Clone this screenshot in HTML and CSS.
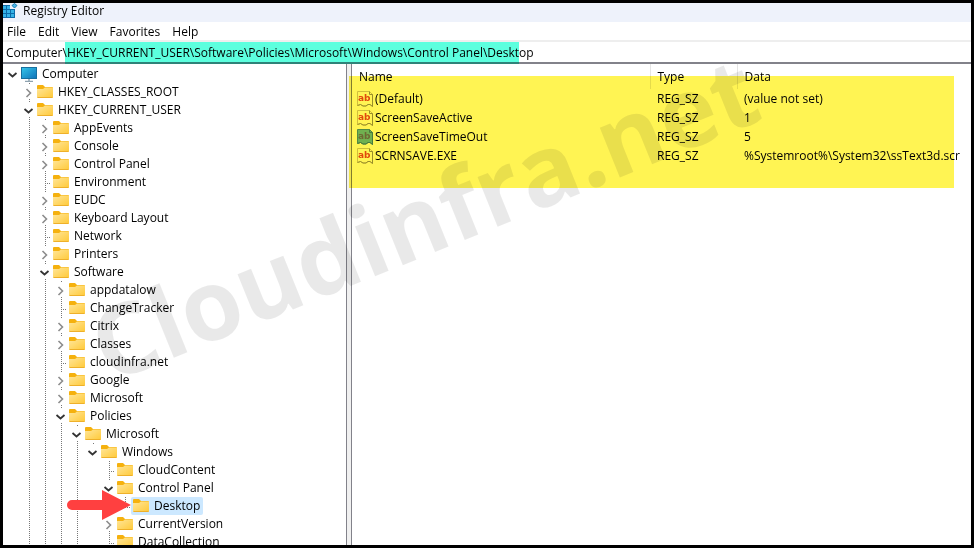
FILE: index.html
```html
<!DOCTYPE html>
<html lang="en">

<head>
    <meta charset="UTF-8">
    <meta name="viewport" content="width=device-width, initial-scale=1.0">
    <title>Registry Editor</title>
    <link rel="stylesheet" href="styles.css">
</head>

<body>
    <!-- shared icons -->
    <svg class="sprite" width="0" height="0" aria-hidden="true">
        <defs>
            <linearGradient id="folder-front" x1="0" y1="0" x2="1" y2="1">
                <stop offset="0" stop-color="#ffe69a" />
                <stop offset="1" stop-color="#ffc937" />
            </linearGradient>
            <linearGradient id="screen" x1="0" y1="0" x2="1" y2="1">
                <stop offset="0" stop-color="#35c6ea" />
                <stop offset="1" stop-color="#0f72b8" />
            </linearGradient>
        </defs>
        <symbol id="folder" viewBox="0 0 16 16">
            <path d="M0 2 Q0 1 1 1 H6 L8 3 H15 Q16 3 16 4 V8 H0 Z" fill="#f5b10e" />
            <path d="M0 5 H6 L8 3.500 H16 V13 Q16 14 15 14 H1 Q0 14 0 13 Z" fill="url(#folder-front)" />
            <path d="M0.500 13.500 H15.500" stroke="#eeb02a" />
        </symbol>
        <symbol id="open" viewBox="0 0 15 18">
            <path d="M4.500 8 L8.500 11.500 L12.500 8" fill="none" stroke="#333" stroke-width="1.800" />
        </symbol>
        <symbol id="closed" viewBox="0 0 15 18">
            <path d="M6.500 6 L10.500 10 L6.500 14" fill="none" stroke="#8c8c8c" stroke-width="1.600" />
        </symbol>
        <symbol id="string" viewBox="0 0 16 16">
            <path class="paper" d="M0.500 0.500 H12.500 L15.500 3.500 V15.500 L13 13.500 L11 13.500 L9 15 L6 15 L3.500 13.500 L0.500 14.500 Z" />
            <path class="edge" d="M12.500 0.500 V3.500 H15.500 V15.500 L13 13.500 L11 13.500 L9 15 L6 15 L3.500 13.500 L0.500 14.500" />
            <text class="letters" x="1" y="10">ab</text>
        </symbol>
    </svg>

    <header class="title-bar">
        <svg class="logo" width="16" height="16" viewBox="0 0 16 16">
            <path d="M0 2 H7 V6 H12 V15 H0 Z" fill="#0c6ba8" />
            <g fill="#35b2e6">
                <rect x="0" y="3" width="3" height="3" />
                <rect x="4" y="3" width="3" height="3" />
                <rect x="0" y="7" width="3" height="3" />
                <rect x="4" y="7" width="3" height="3" />
                <rect x="8" y="7" width="3" height="3" />
                <rect x="0" y="11" width="3" height="3" />
                <rect x="4" y="11" width="3" height="3" />
                <rect x="8" y="11" width="3" height="3" />
            </g>
            <path d="M11.500 0.500 L14 2.500 L11.500 5 L9 2.500 Z" fill="#4cb8e6" stroke="#1678b4" />
        </svg>
        <h1>Registry Editor</h1>
    </header>

    <nav class="menu-bar">
        <button type="button">File</button>
        <button type="button">Edit</button>
        <button type="button">View</button>
        <button type="button">Favorites</button>
        <button type="button">Help</button>
    </nav>

    <div class="address-bar">
        <input type="text" aria-label="Address" value="Computer\HKEY_CURRENT_USER\Software\Policies\Microsoft\Windows\Control Panel\Desktop">
        <div class="marker marker-path"></div>
    </div>

    <main class="panes">
        <section class="tree">
            <ul>
                <li class="root">
                    <div class="row">
                        <button type="button" class="twist" aria-label="Collapse Computer"><svg><use href="#open" /></svg></button>
                        <span class="item">
                            <svg class="icon" viewBox="0 0 16 16">
                                <rect x="0.500" y="1.500" width="15" height="11" fill="url(#screen)" stroke="#176f9f" />
                                <path d="M8 13 V15 M4 15.500 H12" stroke="#8fa3b0" stroke-width="1.500" />
                            </svg>Computer</span>
                    </div>
                    <ul>
                        <li>
                            <div class="row">
                                <button type="button" class="twist" aria-label="Expand HKEY_CLASSES_ROOT"><svg><use href="#closed" /></svg></button>
                                <span class="item"><svg class="icon"><use href="#folder" /></svg>HKEY_CLASSES_ROOT</span>
                            </div>
                        </li>
                        <li class="more">
                            <div class="row">
                                <button type="button" class="twist" aria-label="Collapse HKEY_CURRENT_USER"><svg><use href="#open" /></svg></button>
                                <span class="item"><svg class="icon"><use href="#folder" /></svg>HKEY_CURRENT_USER</span>
                            </div>
                            <ul>
                                <li>
                                    <div class="row">
                                        <button type="button" class="twist" aria-label="Expand AppEvents"><svg><use href="#closed" /></svg></button>
                                        <span class="item"><svg class="icon"><use href="#folder" /></svg>AppEvents</span>
                                    </div>
                                </li>
                                <li>
                                    <div class="row">
                                        <button type="button" class="twist" aria-label="Expand Console"><svg><use href="#closed" /></svg></button>
                                        <span class="item"><svg class="icon"><use href="#folder" /></svg>Console</span>
                                    </div>
                                </li>
                                <li>
                                    <div class="row">
                                        <button type="button" class="twist" aria-label="Expand Control Panel"><svg><use href="#closed" /></svg></button>
                                        <span class="item"><svg class="icon"><use href="#folder" /></svg>Control Panel</span>
                                    </div>
                                </li>
                                <li>
                                    <div class="row">
                                        <span class="stub"></span>
                                        <span class="item"><svg class="icon"><use href="#folder" /></svg>Environment</span>
                                    </div>
                                </li>
                                <li>
                                    <div class="row">
                                        <button type="button" class="twist" aria-label="Expand EUDC"><svg><use href="#closed" /></svg></button>
                                        <span class="item"><svg class="icon"><use href="#folder" /></svg>EUDC</span>
                                    </div>
                                </li>
                                <li>
                                    <div class="row">
                                        <button type="button" class="twist" aria-label="Expand Keyboard Layout"><svg><use href="#closed" /></svg></button>
                                        <span class="item"><svg class="icon"><use href="#folder" /></svg>Keyboard Layout</span>
                                    </div>
                                </li>
                                <li>
                                    <div class="row">
                                        <span class="stub"></span>
                                        <span class="item"><svg class="icon"><use href="#folder" /></svg>Network</span>
                                    </div>
                                </li>
                                <li>
                                    <div class="row">
                                        <button type="button" class="twist" aria-label="Expand Printers"><svg><use href="#closed" /></svg></button>
                                        <span class="item"><svg class="icon"><use href="#folder" /></svg>Printers</span>
                                    </div>
                                </li>
                                <li class="more">
                                    <div class="row">
                                        <button type="button" class="twist" aria-label="Collapse Software"><svg><use href="#open" /></svg></button>
                                        <span class="item"><svg class="icon"><use href="#folder" /></svg>Software</span>
                                    </div>
                                    <ul>
                                        <li>
                                            <div class="row">
                                                <button type="button" class="twist" aria-label="Expand appdatalow"><svg><use href="#closed" /></svg></button>
                                                <span class="item"><svg class="icon"><use href="#folder" /></svg>appdatalow</span>
                                            </div>
                                        </li>
                                        <li>
                                            <div class="row">
                                                <span class="stub"></span>
                                                <span class="item"><svg class="icon"><use href="#folder" /></svg>ChangeTracker</span>
                                            </div>
                                        </li>
                                        <li>
                                            <div class="row">
                                                <button type="button" class="twist" aria-label="Expand Citrix"><svg><use href="#closed" /></svg></button>
                                                <span class="item"><svg class="icon"><use href="#folder" /></svg>Citrix</span>
                                            </div>
                                        </li>
                                        <li>
                                            <div class="row">
                                                <button type="button" class="twist" aria-label="Expand Classes"><svg><use href="#closed" /></svg></button>
                                                <span class="item"><svg class="icon"><use href="#folder" /></svg>Classes</span>
                                            </div>
                                        </li>
                                        <li>
                                            <div class="row">
                                                <span class="stub"></span>
                                                <span class="item"><svg class="icon"><use href="#folder" /></svg>cloudinfra.net</span>
                                            </div>
                                        </li>
                                        <li>
                                            <div class="row">
                                                <button type="button" class="twist" aria-label="Expand Google"><svg><use href="#closed" /></svg></button>
                                                <span class="item"><svg class="icon"><use href="#folder" /></svg>Google</span>
                                            </div>
                                        </li>
                                        <li>
                                            <div class="row">
                                                <button type="button" class="twist" aria-label="Expand Microsoft"><svg><use href="#closed" /></svg></button>
                                                <span class="item"><svg class="icon"><use href="#folder" /></svg>Microsoft</span>
                                            </div>
                                        </li>
                                        <li class="more">
                                            <div class="row">
                                                <button type="button" class="twist" aria-label="Collapse Policies"><svg><use href="#open" /></svg></button>
                                                <span class="item"><svg class="icon"><use href="#folder" /></svg>Policies</span>
                                            </div>
                                            <ul>
                                                <li class="more">
                                                    <div class="row">
                                                        <button type="button" class="twist" aria-label="Collapse Microsoft"><svg><use href="#open" /></svg></button>
                                                        <span class="item"><svg class="icon"><use href="#folder" /></svg>Microsoft</span>
                                                    </div>
                                                    <ul>
                                                        <li>
                                                            <div class="row">
                                                                <button type="button" class="twist" aria-label="Collapse Windows"><svg><use href="#open" /></svg></button>
                                                                <span class="item"><svg class="icon"><use href="#folder" /></svg>Windows</span>
                                                            </div>
                                                            <ul>
                                                                <li>
                                                                    <div class="row">
                                                                        <span class="stub"></span>
                                                                        <span class="item"><svg class="icon"><use href="#folder" /></svg>CloudContent</span>
                                                                    </div>
                                                                </li>
                                                                <li>
                                                                    <div class="row">
                                                                        <button type="button" class="twist" aria-label="Collapse Control Panel"><svg><use href="#open" /></svg></button>
                                                                        <span class="item"><svg class="icon"><use href="#folder" /></svg>Control Panel</span>
                                                                    </div>
                                                                    <ul>
                                                                        <li class="selected">
                                                                            <div class="row">
                                                                                <span class="stub"></span>
                                                                                <span class="item"><svg class="icon"><use href="#folder" /></svg>Desktop</span>
                                                                            </div>
                                                                            <svg class="arrow" width="64" height="30" viewBox="0 0 64 30">
                                                                                <path d="M5 10 H35 V0 L64 15 L35 30 V20 H5 A5 5 0 0 1 5 10 Z" fill="#ff4040" />
                                                                            </svg>
                                                                        </li>
                                                                    </ul>
                                                                </li>
                                                                <li>
                                                                    <div class="row">
                                                                        <button type="button" class="twist" aria-label="Expand CurrentVersion"><svg><use href="#closed" /></svg></button>
                                                                        <span class="item"><svg class="icon"><use href="#folder" /></svg>CurrentVersion</span>
                                                                    </div>
                                                                </li>
                                                                <li>
                                                                    <div class="row">
                                                                        <span class="stub"></span>
                                                                        <span class="item"><svg class="icon"><use href="#folder" /></svg>DataCollection</span>
                                                                    </div>
                                                                </li>
                                                            </ul>
                                                        </li>
                                                    </ul>
                                                </li>
                                            </ul>
                                        </li>
                                    </ul>
                                </li>
                            </ul>
                        </li>
                    </ul>
                </li>
            </ul>
        </section>

        <div class="splitter"></div>

        <section class="values">
            <table>
                <thead>
                    <tr>
                        <th class="col-name">Name</th>
                        <th class="col-type">Type</th>
                        <th>Data</th>
                    </tr>
                </thead>
                <tbody>
                    <tr>
                        <td><span class="value"><svg class="icon"><use href="#string" /></svg>(Default)</span></td>
                        <td>REG_SZ</td>
                        <td>(value not set)</td>
                    </tr>
                    <tr>
                        <td><span class="value"><svg class="icon"><use href="#string" /></svg>ScreenSaveActive</span></td>
                        <td>REG_SZ</td>
                        <td>1</td>
                    </tr>
                    <tr>
                        <td><span class="value current"><svg class="icon"><use href="#string" /></svg>ScreenSaveTimeOut</span></td>
                        <td>REG_SZ</td>
                        <td>5</td>
                    </tr>
                    <tr>
                        <td><span class="value"><svg class="icon"><use href="#string" /></svg>SCRNSAVE.EXE</span></td>
                        <td>REG_SZ</td>
                        <td>%Systemroot%\System32\ssText3d.scr</td>
                    </tr>
                </tbody>
            </table>
            <div class="marker marker-values"></div>
        </section>

        <div class="watermark">Cloudinfra.net</div>
    </main>
</body>

</html>
```
FILE: styles.css
```css
* {
    box-sizing: border-box;
}

body {
    display: flex;
    flex-direction: column;
    height: 100vh;
    margin: 0;
    border: 3px solid #000;
    overflow: hidden;
    background-color: #fff;
    color: #000;
    font-family: "Open Sans", "Noto Sans", sans-serif;
    font-size: 12px;
    line-height: 18px;
}

button,
input {
    margin: 0;
    padding: 0;
    border: none;
    background: none;
    color: inherit;
    font: inherit;
}

.sprite {
    position: absolute;
}

.icon {
    flex: none;
    width: 16px;
    height: 16px;
}

/* title and menu */
.title-bar {
    display: flex;
    align-items: flex-start;
    gap: 4px;
    height: 19px;
    background-color: #eef2fb;
}

.title-bar h1 {
    margin: 0;
    font-size: 12px;
    font-weight: normal;
    line-height: 16px;
}

.menu-bar {
    display: flex;
    gap: 12px;
    height: 18px;
    padding: 1px 0 0 4px;
}

/* address */
.address-bar {
    position: relative;
    display: flex;
    height: 24px;
    border-top: 2px solid #eee;
    border-bottom: 2px solid #82828a;
}

.address-bar input {
    flex: 1;
    padding: 1px 0 0 3px;
    outline: none;
}

.marker {
    position: absolute;
    mix-blend-mode: multiply;
    pointer-events: none;
}

.marker-path {
    top: 0;
    bottom: -2px;
    left: 62px;
    width: 454px;
    background-color: #5cffde;
}

.marker-values {
    top: 12px;
    right: 17px;
    left: -3px;
    height: 112px;
    background-color: #fff453;
}

/* panes */
.panes {
    position: relative;
    display: flex;
    flex: 1;
    min-height: 0;
}

.tree {
    flex: none;
    width: 343px;
    padding: 1px 0 0 1px;
    overflow: hidden;
}

.splitter {
    flex: none;
    width: 6px;
    border: solid #82828a;
    border-width: 0 1px;
    background-color: #f0f0f0;
}

.values {
    position: relative;
    flex: 1;
}

/* tree */
.tree ul {
    margin: 0;
    padding: 0;
    list-style: none;
}

.tree ul ul {
    padding-left: 16px;
}

.tree li {
    background: repeating-linear-gradient(#777 0 1px, transparent 1px 2px) 9px 0 / 1px 100% no-repeat;
}

.tree li:last-child {
    background-size: 1px 9px;
}

.tree li.more {
    background-size: 1px 100%;
}

.tree li.root {
    background: none;
}

.row {
    display: flex;
    height: 18px;
}

.twist {
    flex: none;
    width: 15px;
    height: 14px;
    margin: 2px 0;
    background-color: #fff;
}

.twist svg {
    display: block;
    width: 15px;
    height: 18px;
    margin-top: -2px;
}

.stub {
    flex: none;
    width: 15px;
    background: repeating-linear-gradient(90deg, #777 0 1px, transparent 1px 2px) 9px 10px / 6px 1px no-repeat;
}

.item {
    display: flex;
    align-items: center;
    gap: 5px;
    padding: 0 3px 0 2px;
    white-space: nowrap;
}

.selected {
    position: relative;
}

.selected .item {
    border-radius: 2px;
    background-color: #cce8ff;
}

.arrow {
    position: absolute;
    top: -7px;
    left: -49px;
}

/* values */
table {
    width: 100%;
    border-collapse: collapse;
    table-layout: fixed;
}

th {
    height: 25px;
    padding: 0 0 0 7px;
    border-left: 1px solid #e5e5e5;
    font-weight: normal;
    text-align: left;
}

.col-name {
    width: 298px;
    border-left: none;
}

.col-type {
    width: 87px;
}

td {
    height: 19px;
    padding: 0 0 0 7px;
    white-space: nowrap;
}

td:first-child {
    padding-left: 5px;
}

.value {
    display: flex;
    align-items: center;
    gap: 2px;
}

/* the selected value overrides these colours */
.paper {
    fill: var(--paper, #fff);
    stroke: var(--paper-line, #d0c8b0);
}

.edge {
    fill: none;
    stroke: var(--paper-edge, #98947c);
}

.letters {
    fill: var(--letters, #e04c20);
    font-family: "DejaVu Sans", sans-serif;
    font-size: 9px;
    font-weight: bold;
}

.current {
    --paper: #70b8f6;
    --paper-line: #5090d0;
    --paper-edge: #4880b8;
    --letters: #6e6e9a;
}

.watermark {
    position: absolute;
    bottom: 151px;
    left: 110px;
    color: rgba(0, 0, 0, 0.085);
    font-size: 98px;
    font-weight: bold;
    line-height: 98px;
    white-space: nowrap;
    transform: rotate(-22deg);
    transform-origin: left bottom;
    mix-blend-mode: multiply;
    pointer-events: none;
}
```
